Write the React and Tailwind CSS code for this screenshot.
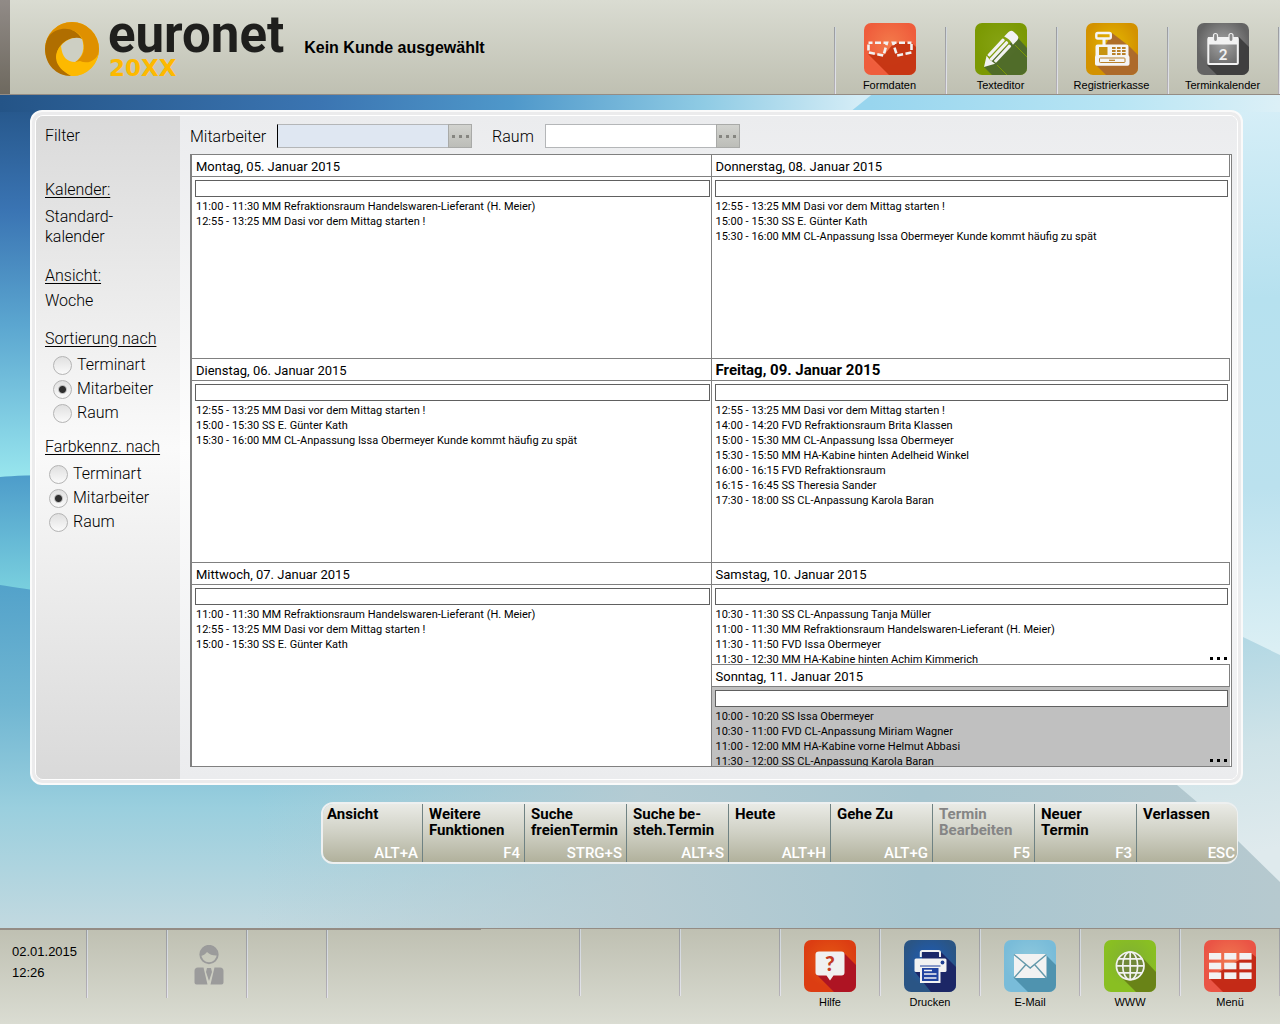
import { useState } from 'react'

const HEADER_TILES = [
  { label: 'Formdaten', icon: FormIcon },
  { label: 'Texteditor', icon: PencilIcon },
  { label: 'Registrierkasse', icon: RegisterIcon },
  { label: 'Terminkalender', icon: CalendarIcon },
]

const FOOTER_TILES = [
  { label: 'Hilfe', icon: HelpIcon },
  { label: 'Drucken', icon: PrintIcon },
  { label: 'E-Mail', icon: MailIcon },
  { label: 'WWW', icon: GlobeIcon },
  { label: 'Menü', icon: MenuIcon },
]

const LEFT_DAYS = [
  {
    title: 'Montag, 05. Januar 2015',
    items: [
      '11:00 - 11:30 MM Refraktionsraum Handelswaren-Lieferant (H. Meier)',
      '12:55 - 13:25 MM Dasi vor dem Mittag starten !',
    ],
  },
  {
    title: 'Dienstag, 06. Januar 2015',
    items: [
      '12:55 - 13:25 MM Dasi vor dem Mittag starten !',
      '15:00 - 15:30 SS E. Günter Kath',
      '15:30 - 16:00 MM CL-Anpassung Issa Obermeyer Kunde kommt häufig zu spät',
    ],
  },
  {
    title: 'Mittwoch, 07. Januar 2015',
    items: [
      '11:00 - 11:30 MM Refraktionsraum Handelswaren-Lieferant (H. Meier)',
      '12:55 - 13:25 MM Dasi vor dem Mittag starten !',
      '15:00 - 15:30 SS E. Günter Kath',
    ],
  },
]

const RIGHT_DAYS = [
  {
    title: 'Donnerstag, 08. Januar 2015',
    items: [
      '12:55 - 13:25 MM Dasi vor dem Mittag starten !',
      '15:00 - 15:30 SS E. Günter Kath',
      '15:30 - 16:00 MM CL-Anpassung Issa Obermeyer Kunde kommt häufig zu spät',
    ],
  },
  {
    title: 'Freitag, 09. Januar 2015',
    current: true,
    items: [
      '12:55 - 13:25 MM Dasi vor dem Mittag starten !',
      '14:00 - 14:20 FVD Refraktionsraum Brita Klassen',
      '15:00 - 15:30 MM CL-Anpassung Issa Obermeyer',
      '15:30 - 15:50 MM HA-Kabine hinten Adelheid Winkel',
      '16:00 - 16:15 FVD Refraktionsraum',
      '16:15 - 16:45 SS Theresia Sander',
      '17:30 - 18:00 SS CL-Anpassung Karola Baran',
    ],
  },
  {
    title: 'Samstag, 10. Januar 2015',
    half: true,
    items: [
      '10:30 - 11:30 SS CL-Anpassung Tanja Müller',
      '11:00 - 11:30 MM Refraktionsraum Handelswaren-Lieferant (H. Meier)',
      '11:30 - 11:50 FVD Issa Obermeyer',
      '11:30 - 12:30 MM HA-Kabine hinten Achim Kimmerich',
    ],
  },
  {
    title: 'Sonntag, 11. Januar 2015',
    half: true,
    closed: true,
    items: [
      '10:00 - 10:20 SS Issa Obermeyer',
      '10:30 - 11:00 FVD CL-Anpassung Miriam Wagner',
      '11:00 - 12:00 MM HA-Kabine vorne Helmut Abbasi',
      '11:30 - 12:00 SS CL-Anpassung Karola Baran',
    ],
  },
]

const ACTIONS = [
  { lines: ['Ansicht'], shortcut: 'ALT+A' },
  { lines: ['Weitere', 'Funktionen'], shortcut: 'F4' },
  { lines: ['Suche', 'freienTermin'], shortcut: 'STRG+S' },
  { lines: ['Suche be-', 'steh.Termin'], shortcut: 'ALT+S' },
  { lines: ['Heute'], shortcut: 'ALT+H' },
  { lines: ['Gehe Zu'], shortcut: 'ALT+G' },
  { lines: ['Termin', 'Bearbeiten'], shortcut: 'F5', disabled: true },
  { lines: ['Neuer', 'Termin'], shortcut: 'F3' },
  { lines: ['Verlassen'], shortcut: 'ESC' },
]

const OPTIONS = ['Terminart', 'Mitarbeiter', 'Raum']

export default function App() {
  return (
    <div className="relative isolate flex min-h-screen flex-col font-[Roboto,sans-serif] text-black">
      <Backdrop />
      <Header />
      <main className="flex flex-1 flex-col pt-[15px] pr-[37px] pl-[30px]">
        <div className="rounded-xl border-2 border-[#fafafa] bg-[#ebebec] p-[3px]">
          <div className="flex overflow-hidden rounded-lg border border-white">
            <Sidebar />
            <Schedule />
          </div>
        </div>
        <ActionBar />
      </main>
      <Footer />
    </div>
  )
}

// ----------------------------------------------------------------------------
function Header() {
  return (
    <header className="flex h-[95px] border-b border-[#948c84] bg-linear-to-b from-[#dadcd2] to-[#bfc0b2] font-['Liberation_Sans',sans-serif]">
      <div className="w-[10px] shrink-0 bg-linear-to-b from-[#918b87] to-[#6e695f]" />
      <div className="flex flex-1 items-start">
        <Logo />
        <h1 className="pt-[36px] pl-[20px] text-base leading-6 font-bold">Kein Kunde ausgewählt</h1>
      </div>
      <nav className="flex items-end">
        <Divider tall />
        {HEADER_TILES.map(({ label, icon: Icon }) => (
          <div key={label} className="flex items-end">
            <Tile label={label} className="w-[109px] pr-[2px] pb-px"><Icon /></Tile>
            <Divider tall />
          </div>
        ))}
      </nav>
    </header>
  )
}

function Divider({ tall }) {
  return (
    <span className={`flex w-[2px] shrink-0 ${tall ? 'h-[67px]' : 'h-[68px]'}`}>
      <span className="w-px bg-linear-to-b from-[#9a9ca0] to-[#b5b1b8]" />
      <span className="w-px bg-linear-to-b from-[#cfd6dc] to-[#e3e3ea]" />
    </span>
  )
}

function Tile({ label, className, children }) {
  return (
    <button type="button" className={`flex flex-col items-center text-[11px] leading-4 ${className}`}>
      {children}
      <span className="mt-[2px]">{label}</span>
    </button>
  )
}

function Logo() {
  return (
    <div className="flex pt-[16px] pl-[34px]">
      <svg width="56" height="56" viewBox="0 0 56 56" className="mt-[5px]" aria-hidden="true">
        <circle cx="28" cy="28" r="27" fill="#fdb900" />
        <path d="M1 28A27 27 0 0 1 55 28C55 40 47 46 31 41C40 36 42 27 38 17C32 6 12 3 1 24Z" fill="#df9000" />
        <path d="M5 15C14 5 31 5 38 18C33 16 24 16 17 24C9 33 12 46 27 55C12 55 1 43 1 28C1 23 3 18 5 15Z" fill="#b06e00" />
        <path d="M16 26C18 37 24 42 31 41L36 40C44 44 55 39 55 28C55 43 43 55 29 55C12 49 8 35 16 26Z" fill="#fdb900" />
        <path d="M17 25C22 18 32 15 38 18C41 27 39 36 31 41C23 41 18 36 17 25Z" fill="#cdcfc3" />
      </svg>
      <div className="pl-[8px]">
        <div className="font-[Roboto,sans-serif] text-[51px] leading-[38px] font-bold text-[#1f1f1d]">euronet</div>
        <div className="mt-[4px] pl-px font-['DejaVu_Sans',sans-serif] text-[23px] leading-[20px] font-bold text-[#fdb900]">20XX</div>
      </div>
    </div>
  )
}

// ----------------------------------------------------------------------------
function Sidebar() {
  return (
    <aside className="w-[144px] shrink-0 bg-linear-to-b from-[#dadada] via-[#fafafa] to-[#d9d9d9] pt-[8px] pl-[9px] text-base leading-6 font-light">
      <h2>Filter</h2>
      <h3 className="mt-[30px] underline underline-offset-2">Kalender:</h3>
      <p className="mt-[5px] leading-5">Standard-<br />kalender</p>
      <h3 className="mt-[17px] underline underline-offset-2">Ansicht:</h3>
      <p className="mt-px">Woche</p>
      <RadioGroup name="sort" title="Sortierung nach" className="mt-[14px]" listClass="mt-[2px] pl-[8px]" />
      <RadioGroup name="color" title="Farbkennz. nach" className="mt-[10px]" listClass="mt-[3px] pl-[4px]" />
    </aside>
  )
}

function RadioGroup({ name, title, className, listClass }) {
  const [value, setValue] = useState('Mitarbeiter')
  return (
    <fieldset className={className}>
      <legend className="whitespace-nowrap underline underline-offset-2">{title}</legend>
      <div className={listClass}>
        {OPTIONS.map((o) => (
          <label key={o} className="flex items-center gap-[5px]">
            <input
              type="radio"
              name={name}
              value={o}
              checked={value === o}
              onChange={() => setValue(o)}
              className="size-[19px] appearance-none rounded-full border border-[#b4b4b4] bg-[linear-gradient(#e0e0e0,#fafafa)] checked:bg-[radial-gradient(circle,#2e2e2e_0_3px,#77777766_4px,transparent_5px),linear-gradient(#e0e0e0,#fafafa)]"
            />
            {o}
          </label>
        ))}
      </div>
    </fieldset>
  )
}

function Schedule() {
  return (
    <section className="min-w-0 flex-1 bg-linear-to-b from-[#ebecee] via-[#fdfdfd] to-[#ebecee] pt-[8px] pr-[5px] pb-[12px] pl-[10px]">
      <div className="flex items-center gap-[20px] text-base font-light">
        <LookupField id="staff" label="Mitarbeiter" className="border-l-black bg-[#dfe7f2]" />
        <LookupField id="room" label="Raum" className="bg-white" />
      </div>
      <div className="mt-[6px] grid grid-cols-2 border border-l-2 border-[#808080] bg-white">
        <div className="border-r border-[#808080]">
          {LEFT_DAYS.map((d) => <Day key={d.title} day={d} />)}
        </div>
        <div className="pr-px">
          {RIGHT_DAYS.map((d) => <Day key={d.title} day={d} last />)}
        </div>
      </div>
    </section>
  )
}

function LookupField({ id, label, className }) {
  return (
    <div className="flex h-[24px] items-center">
      <label htmlFor={id} className="mr-[11px] pt-[2px]">{label}</label>
      <input id={id} type="text" className={`h-[24px] w-[171px] border border-r-0 border-[#b4b6b8] px-1 text-sm outline-none ${className}`} />
      <button
        type="button"
        aria-label={`${label} suchen`}
        className="flex size-[24px] items-center justify-center gap-[4px] border border-[#a9aaa8] bg-linear-to-b from-[#d2d3cf] to-[#bcbdb8]"
      >
        <Dots className="size-[3px] bg-[#858580]" />
      </button>
    </div>
  )
}

function Dots({ className }) {
  return [0, 1, 2].map((i) => <span key={i} className={className} />)
}

function Day({ day, last }) {
  const { title, items, current, half, closed } = day
  return (
    <article
      className={`relative overflow-hidden border-t border-[#808080] first:border-t-0 ${half ? 'h-[102px]' : 'min-h-[204px] first:min-h-[203px]'} ${closed ? 'bg-[#c0c0c0]' : ''}`}
    >
      <h3
        className={`h-[22px] border-b border-[#808080] bg-white pl-[4px] ${last ? 'border-r' : ''} ${current ? 'text-[15px] leading-[23px] font-bold' : 'text-[13px] leading-[23px]'}`}
      >
        {title}
      </h3>
      <div className={`mt-[3px] ml-[3px] h-[17px] border border-[#606060] bg-white ${last ? 'mr-[2px]' : 'mr-px'}`} />
      <ul className="mt-[2px] pl-[4px] text-[11px] leading-[15px] whitespace-nowrap">
        {items.map((t) => <li key={t}>{t}</li>)}
      </ul>
      {half && (
        <button type="button" aria-label="Weitere Termine" className="absolute right-[3px] bottom-[4px] flex gap-[4px]">
          <Dots className="size-[3px] bg-black" />
        </button>
      )}
    </article>
  )
}

function ActionBar() {
  return (
    <div className="mt-[17px] mr-[5px] mb-4 flex self-end overflow-hidden rounded-xl border-2 border-r border-[#eef0f0]">
      {ACTIONS.map(({ lines, shortcut, disabled }, i) => (
        <button
          key={shortcut}
          type="button"
          disabled={disabled}
          className={`flex h-[58px] flex-col bg-linear-to-b from-[#eaebe6] via-[#cfd0c4] to-[#b1b19c] text-left text-[15px] leading-4 ${i === 0 ? 'w-[100px] pl-[4px]' : 'pl-[6px]'} ${i === ACTIONS.length - 1 ? 'w-[100px] pr-[2px]' : 'border-r border-[#6f8283] pr-[4px]'} ${i > 0 && i < ACTIONS.length - 1 ? 'w-[102px]' : ''}`}
        >
          <span className={`pt-[2px] font-bold ${disabled ? 'text-[#858585]' : ''}`}>
            {lines.map((l) => <span key={l} className="block">{l}</span>)}
          </span>
          <span className="mt-auto self-end pb-px font-medium text-white">{shortcut}</span>
        </button>
      ))}
    </div>
  )
}

// ----------------------------------------------------------------------------
function Footer() {
  return (
    <footer className="flex h-[96px] overflow-hidden border-t border-[#948c84] bg-linear-to-b from-[#bfc0b2] to-[#dadcd2] font-['Liberation_Sans',sans-serif]">
      <div className="flex flex-1 border-t border-[#948c84]">
        <div className="w-[86px] pt-[11px] pl-[12px] text-[13px] leading-[21px]">
          <div>02.01.2015</div>
          <div>12:26</div>
        </div>
        <Divider />
        <div className="w-[78px]" />
        <Divider />
        <div className="flex w-[78px] justify-center pt-[15px] pl-[4px]"><PersonIcon /></div>
        <Divider />
        <div className="w-[78px]" />
        <Divider />
      </div>
      <nav className="-mr-px flex">
        {[0, 1, 2].map((i) => (
          <div key={i} className="flex">
            <div className="w-[98px]" />
            <Divider tall />
          </div>
        ))}
        {FOOTER_TILES.map(({ label, icon: Icon }) => (
          <div key={label} className="flex">
            <Tile label={label} className="w-[98px] pt-[11px]"><Icon /></Tile>
            <Divider tall />
          </div>
        ))}
      </nav>
    </footer>
  )
}

// ----------------------------------------------------------------------------
// Blue wave wallpaper
function Backdrop() {
  return (
    <svg className="absolute inset-0 -z-10 h-full w-full" viewBox="0 0 1280 1024" preserveAspectRatio="none" aria-hidden="true">
      <defs>
        <linearGradient id="sky" x1="0" y1="0" x2="1" y2="0">
          <stop offset="0" stopColor="#245487" />
          <stop offset=".25" stopColor="#3b75b2" />
          <stop offset=".4" stopColor="#4f98ca" />
          <stop offset=".55" stopColor="#8fcbe4" />
          <stop offset=".67" stopColor="#d3ecf6" />
          <stop offset="1" stopColor="#d8eef6" />
        </linearGradient>
        <linearGradient id="leftWave" x1="0" y1="95" x2="0" y2="478" gradientUnits="userSpaceOnUse">
          <stop offset="0" stopColor="#245487" />
          <stop offset=".3" stopColor="#3a74b3" />
          <stop offset=".6" stopColor="#5ba6d0" />
          <stop offset="1" stopColor="#98e6ee" />
        </linearGradient>
        <linearGradient id="midWave" x1="0" y1="0" x2="0" y2="1">
          <stop offset="0" stopColor="#4d9cca" />
          <stop offset="1" stopColor="#7dd4e0" />
        </linearGradient>
        <linearGradient id="lowWave" x1="0" y1="585" x2="0" y2="928" gradientUnits="userSpaceOnUse">
          <stop offset="0" stopColor="#53a2ca" />
          <stop offset=".35" stopColor="#70b6d2" />
          <stop offset=".65" stopColor="#9acfde" />
          <stop offset="1" stopColor="#c2d9e0" />
        </linearGradient>
        <linearGradient id="lowTint" x1="0" y1="0" x2="1" y2="0">
          <stop offset=".2" stopColor="#b5ccd3" stopOpacity="0" />
          <stop offset=".5" stopColor="#b7cbd2" stopOpacity=".9" />
          <stop offset=".72" stopColor="#a8c6d0" />
          <stop offset="1" stopColor="#b6c9cf" />
        </linearGradient>
        <linearGradient id="rightTop" x1="870" y1="95" x2="1280" y2="95" gradientUnits="userSpaceOnUse">
          <stop offset="0" stopColor="#98d5ee" />
          <stop offset=".6" stopColor="#b8e5f4" />
          <stop offset="1" stopColor="#dcf0f7" />
        </linearGradient>
        <linearGradient id="rightSide" x1="1243" y1="110" x2="1262" y2="650" gradientUnits="userSpaceOnUse">
          <stop offset="0" stopColor="#d5eef7" />
          <stop offset=".35" stopColor="#b6e1ef" />
          <stop offset=".7" stopColor="#bbe1ee" />
          <stop offset="1" stopColor="#dbeff4" />
        </linearGradient>
        <linearGradient id="rightLow" x1="1240" y1="640" x2="1270" y2="850" gradientUnits="userSpaceOnUse">
          <stop offset="0" stopColor="#b3d8e4" />
          <stop offset=".5" stopColor="#cfe3e8" />
          <stop offset="1" stopColor="#dfeaed" />
        </linearGradient>
      </defs>
      <rect width="1280" height="1024" fill="url(#sky)" />
      <path d="M890 80L850 112L850 200H1280V80Z" fill="url(#rightTop)" />
      <path d="M0 112H200V480H0Z" fill="url(#leftWave)" />
      <path d="M0 477Q20 475 60 475V600H0Z" fill="url(#midWave)" />
      <path d="M0 585Q20 588 60 594V780H1280V1024H0Z" fill="url(#lowWave)" />
      <rect y="780" width="1280" height="244" fill="url(#lowTint)" />
      <path d="M1200 112H1280V660L1200 620Z" fill="url(#rightSide)" />
      <path d="M1200 619L1243 637L1280 655V882L1237 840L1197 802L1177 785H1150Z" fill="url(#rightLow)" />
    </svg>
  )
}

// Rounded 52px square with a lit centre and a long shadow under the glyph
function IconTile({ id, base, glow, shade, shadow, children }) {
  return (
    <svg width="52" height="52" viewBox="0 0 52 52" aria-hidden="true">
      <defs>
        <radialGradient id={id} cx=".5" cy=".4" r=".5">
          <stop offset="0" stopColor={glow} />
          <stop offset="1" stopColor={base} />
        </radialGradient>
        <clipPath id={`${id}-clip`}><rect width="52" height="52" rx="7" /></clipPath>
      </defs>
      <g clipPath={`url(#${id}-clip)`}>
        <rect width="52" height="52" fill={`url(#${id})`} />
        <path d={shadow} fill={shade} opacity=".9" />
      </g>
      {children}
    </svg>
  )
}

function FormIcon() {
  return (
    <IconTile id="form" base="#ef5d3c" glow="#f37a4a" shade="#c23210" shadow="M4 31L25 52H52V24L47 19L30 20L20 32Z">
      <g fill="none" stroke="#f2f2f2" strokeWidth="2.6">
        <path d="M4.500 19.800H23L19.500 32.500L4.500 29.500Z" strokeDasharray="6 2.500" strokeDashoffset="2" />
        <path d="M47.500 19.800H29L33 32.500L47.500 29.500Z" strokeDasharray="6 2.500" strokeDashoffset="2" />
      </g>
    </IconTile>
  )
}

function PencilIcon() {
  return (
    <IconTile id="pencil" base="#7b9903" glow="#86a313" shade="#4b672d" shadow="M9 44L17 52H52V25L42 14Z">
      <path d="M40 22L52 34M22 42L32 52" stroke="#7b9903" strokeWidth="1" />
      <g transform="translate(9 44) rotate(-47)" fill="#f2f2f2">
        <path d="M0 0L10-5.800Q8.500 0 10 5.800Z" />
        <rect x="11" y="-6" width="23" height="3.200" rx="1" />
        <rect x="9.500" y="-1.600" width="25" height="3.200" rx="1" />
        <rect x="11" y="2.800" width="23" height="3.200" rx="1" />
        <path d="M36-6H42Q46-6 46-2V2Q46 6 42 6H36Q38 0 36-6Z" />
      </g>
    </IconTile>
  )
}

function RegisterIcon() {
  return (
    <IconTile id="register" base="#d39200" glow="#e5b800" shade="#a8662f" shadow="M10 42L20 52H52V32L43 23L26 10L20 21Z">
      <rect x="10.300" y="10" width="14.500" height="5.500" rx="1.500" fill="none" stroke="#f5f5f5" strokeWidth="2.400" />
      <rect x="16.500" y="16" width="3" height="6" fill="#f5f5f5" />
      <path d="M9.500 23.500Q9.500 21.500 11.500 21.500H40.500Q42.500 21.500 42.500 23.500V32L43.500 34V41Q43.500 42.800 41.500 42.800H11Q9 42.800 9 41V34L9.500 32Z" fill="#f5f5f5" />
      <rect x="13" y="24" width="8.500" height="8" fill="#c79310" />
      <g fill="#b9812a">
        {[26, 31, 36].map((x) => [24, 27, 30].map((y) => <rect key={`${x}-${y}`} x={x} y={y} width="3.600" height="2" />))}
      </g>
      <rect x="13.500" y="35" width="25.500" height="4.500" rx=".8" fill="none" stroke="#b9812a" strokeWidth="1" />
      <path d="M23 37.300H29" stroke="#b9812a" strokeWidth="1.200" />
    </IconTile>
  )
}

function CalendarIcon() {
  return (
    <IconTile id="cal" base="#646464" glow="#a2a2a2" shade="#3b3b3b" shadow="M10 42L20 52H52V24L42 14V41Z">
      <rect x="11.300" y="15" width="29.500" height="26" rx="1" fill="none" stroke="#f2f2f2" strokeWidth="2" />
      <rect x="11" y="14" width="30" height="7.500" fill="#f2f2f2" />
      <rect x="16.500" y="10.500" width="4" height="8" rx="2" fill="#8a8a8a" stroke="#f2f2f2" strokeWidth="1.200" />
      <rect x="32" y="10.500" width="4" height="8" rx="2" fill="#8a8a8a" stroke="#f2f2f2" strokeWidth="1.200" />
      <text x="26" y="36.500" textAnchor="middle" fontSize="15" fontWeight="700" fill="#f2f2f2" fontFamily="Lato, sans-serif">2</text>
    </IconTile>
  )
}

function HelpIcon() {
  return (
    <IconTile id="help" base="#dc3d12" glow="#e55a14" shade="#a80f26" shadow="M12 34L30 52H52V25L39 12L26 36Z">
      <path d="M15 11.500H37.500Q40.500 11.500 40.500 14.500V32.500Q40.500 35.500 37.500 35.500H29.500L26 40.500L22.500 35.500H15Q11.500 35.500 11.500 32.500V14.500Q11.500 11.500 15 11.500Z" fill="#f0f0f0" />
      <text x="26" y="31" textAnchor="middle" fontSize="21" fontWeight="900" fill="#c43a22" fontFamily="Lato, sans-serif">?</text>
    </IconTile>
  )
}

function PrintIcon() {
  return (
    <IconTile id="print" base="#2a5585" glow="#1d5cb8" shade="#1b2263" shadow="M11 32L27 52H52V27L36 11H18V20Z">
      <path d="M16.800 17V12.500Q16.800 11 18.300 11H34.500Q36 11 36 12.500V17" fill="none" stroke="#f2f2f2" strokeWidth="2" />
      <path d="M12 18.500H41Q42.500 18.500 42.500 20V30.500Q42.500 32 41 32H12Q10.500 32 10.500 30.500V20Q10.500 18.500 12 18.500Z" fill="#f2f2f2" />
      <circle cx="38.500" cy="22.500" r="1.900" fill="#1f3f92" />
      <rect x="17" y="27" width="18.500" height="15" fill="#2143a0" stroke="#f2f2f2" strokeWidth="2" />
      <path d="M16 26H36.500" stroke="#2143a0" strokeWidth="1" />
      <path d="M20 30.500H28M20 34H32.500M20 38H32.500" stroke="#f2f2f2" strokeWidth="1.600" />
    </IconTile>
  )
}

function MailIcon() {
  return (
    <IconTile id="mail" base="#79bcd9" glow="#8fc9dd" shade="#4a8eaa" shadow="M10 38L24 52H52V25L42 15V38Z">
      <rect x="10" y="14" width="32.500" height="24" rx="1" fill="#f2f2f2" />
      <path d="M10 14.500L26.200 28L42.500 14.500M10 38L21.500 25M42.500 38L31 25" fill="none" stroke="#6298aa" strokeWidth="1.400" />
    </IconTile>
  )
}

function GlobeIcon() {
  return (
    <IconTile id="globe" base="#89bf22" glow="#7fae35" shade="#667c16" shadow="M15 35L32 52H52V32L37 16Z">
      <circle cx="26.200" cy="25.800" r="13.800" fill="#71883a" />
      <g fill="none" stroke="#f2f2f2" strokeWidth="1.700">
        <circle cx="26.200" cy="25.800" r="13.800" />
        <ellipse cx="26.200" cy="25.800" rx="7.500" ry="13.800" />
        <path d="M26.200 12V39.600M12.400 25.800H40M14.500 18.800H38M14.500 32.800H38" />
      </g>
    </IconTile>
  )
}

function MenuIcon() {
  return (
    <IconTile id="menu" base="#ea5445" glow="#f07a50" shade="#c02612" shadow="M5 38L19 52H52V17L47 13Z">
      <g fill="#f2f2f2">
        {[5, 20.2, 35.4].map((x) => [13, 22.7, 32.4].map((y) => (
          <rect key={`${x}-${y}`} x={x} y={y} width="12.200" height="6.600" />
        )))}
      </g>
    </IconTile>
  )
}

function PersonIcon() {
  return (
    <svg width="30" height="40" viewBox="0 0 30 40" aria-hidden="true" fill="#9b9b9b">
      <circle cx="15" cy="9.500" r="8.700" fill="none" stroke="#9b9b9b" strokeWidth="1.900" />
      <path d="M6.500 10Q7 1 15 1Q23 1 23.500 10.500Q17 11 13 7Q10.500 10.500 6.500 11Z" />
      <path d="M4 22.500H9.500L13.500 39.500H2.500Q.5 39.500 .5 37.500V26Q.5 22.500 4 22.500ZM20.500 22.500H26Q29.500 22.500 29.500 26V37.500Q29.500 39.500 27.500 39.500H16.500ZM13 23H17L18 27L15 36L12 27Z" />
    </svg>
  )
}
